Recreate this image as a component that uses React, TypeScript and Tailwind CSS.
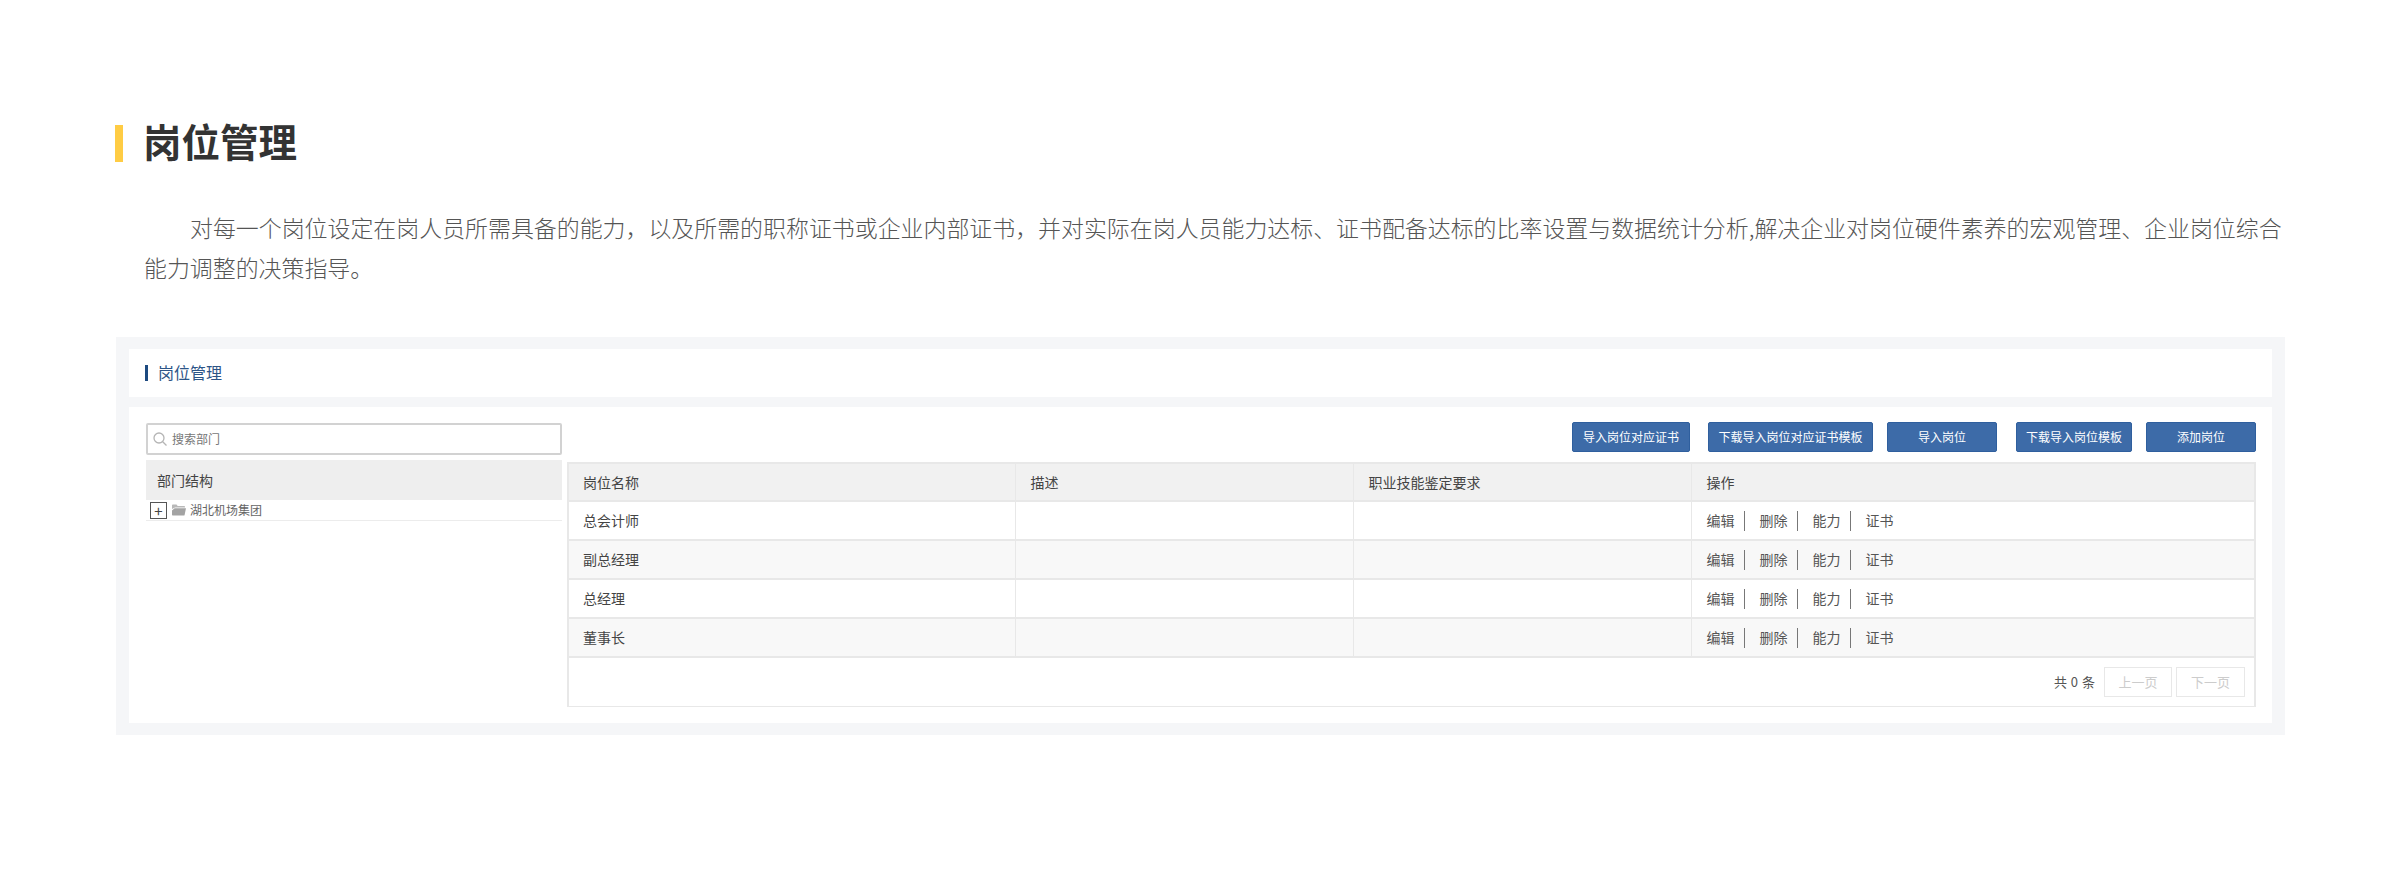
const FONT = "font-['Noto_Sans_CJK_SC','Noto_Sans',sans-serif]";

const buttons = [
  { label: "导入岗位对应证书", w: "w-[118px]", ml: "ml-0" },
  { label: "下载导入岗位对应证书模板", w: "w-[165px]", ml: "ml-[18px]" },
  { label: "导入岗位", w: "w-[110px]", ml: "ml-[14px]" },
  { label: "下载导入岗位模板", w: "w-[116px]", ml: "ml-[19px]" },
  { label: "添加岗位", w: "w-[110px]", ml: "ml-[14px]" },
];

const rows = ["总会计师", "副总经理", "总经理", "董事长"];

function Actions() {
  const items = ["编辑", "删除", "能力", "证书"];
  return (
    <div className="flex items-center text-[14px] text-[#555]">
      {items.map((t, i) => (
        <div key={t} className="flex items-center">
          <span className="w-[28px]">{t}</span>
          {i < 3 && <span className="ml-[9px] mr-[15px] h-[20px] w-px bg-[#777]" />}
        </div>
      ))}
    </div>
  );
}

function SearchIcon() {
  return (
    <svg width="16" height="16" viewBox="0 0 16 16" fill="none" stroke="#b5b5b5" strokeWidth="1.3">
      <circle cx="7" cy="7" r="5" />
      <path d="M10.7 10.7 14.5 14.5" />
    </svg>
  );
}

function FolderIcon() {
  return (
    <svg width="14" height="12" viewBox="0 0 14 12">
      <path d="M0 1.5C0 .8.5.5 1 .5h3.5l1.2 1.5H12c.6 0 1 .4 1 1v.5H3L0 5Z" fill="#b8b8b8" />
      <path d="M2.6 4.2H14L12.6 11c-.1.4-.4.6-.8.6H1c-.6 0-1-.4-1-1V6.5Z" fill="#a3a3a3" />
    </svg>
  );
}

export default function App() {
  return (
    <div className={`${FONT} h-[870px] w-[2400px] overflow-hidden bg-white pt-[125px]`}>
      <div className="flex h-[37px] items-center pl-[115px]">
        <div className="h-[37px] w-[8px] bg-[#ffcc44]" />
        <h1 className="mb-[6px] ml-[20px] text-[38.5px] font-bold leading-[37px] text-[#333]">岗位管理</h1>
      </div>

      <p className="ml-[144px] mt-[45px] w-[2150px] indent-[46px] text-[22.93px] font-light leading-[40px] text-[#555]">
        对每一个岗位设定在岗人员所需具备的能力，以及所需的职称证书或企业内部证书，并对实际在岗人员能力达标、证书配备达标的比率设置与数据统计分析,解决企业对岗位硬件素养的宏观管理、企业岗位综合能力调整的决策指导。
      </p>

      <section className="ml-[116px] mt-[50px] flex h-[398px] w-[2169px] flex-col gap-[10px] bg-[#f5f6f8] px-[13px] py-[12px]">
        <div className="flex h-[48px] items-center bg-white pl-[16px]">
          <span className="h-[16px] w-[3px] bg-[#1d4a80]" />
          <span className="mb-[2px] ml-[10px] text-[16px] text-[#2d5587]">岗位管理</span>
        </div>

        <div className="flex flex-1 gap-[5px] bg-white pl-[17px] pr-[16px] pt-[15px]">
          <aside className="w-[416px]">
            <div className="mt-[1px] flex h-[32px] items-center rounded-[2px] border-2 border-[#d2d2d2] bg-white pl-[4px]">
              <SearchIcon />
              <span className="ml-[4px] text-[12px] text-[#777]">搜索部门</span>
            </div>
            <div className="mt-[5px] flex h-[40px] items-center bg-[#eeeeee] pl-[11px] text-[14px] text-[#444]">部门结构</div>
            <div className="flex h-[21px] items-center border-b border-[#ececec] pl-[4px]">
              <span className="flex h-[17px] w-[17px] items-center justify-center border-[1.5px] border-[#555] text-[15px] leading-none text-[#444]">+</span>
              <span className="ml-[5px] flex"><FolderIcon /></span>
              <span className="ml-[4px] text-[12px] text-[#666]">湖北机场集团</span>
            </div>
          </aside>

          <div className="flex-1">
            <div className="flex h-[30px] justify-end">
              {buttons.map((b) => (
                <button
                  key={b.label}
                  className={`${b.w} ${b.ml} h-[30px] rounded-[2px] border border-[#2f5f9e] bg-[#3d6ba8] text-[12px] text-white`}
                >
                  {b.label}
                </button>
              ))}
            </div>

            <div className="mt-[10px] border-2 border-[#e8e8e8] border-b">
              <table className="w-full table-fixed border-collapse text-[14px] text-[#444]">
                <colgroup>
                  <col className="w-[446px]" />
                  <col className="w-[338px]" />
                  <col className="w-[338px]" />
                  <col />
                </colgroup>
                <thead>
                  <tr className="h-[37px] bg-[#f1f1f1] text-left">
                    <th className="border-b-2 border-[#e8e8e8] pl-[14px] font-normal">岗位名称</th>
                    <th className="border-b-2 border-l border-[#e8e8e8] pl-[15px] font-normal">描述</th>
                    <th className="border-b-2 border-l border-[#e8e8e8] pl-[15px] font-normal">职业技能鉴定要求</th>
                    <th className="border-b-2 border-l border-[#e8e8e8] pl-[15px] font-normal">操作</th>
                  </tr>
                </thead>
                <tbody>
                  {rows.map((r, i) => (
                    <tr key={r} className={`h-[39px] ${i % 2 === 1 ? "bg-[#f8f8f8]" : "bg-white"}`}>
                      <td className="border-b-2 border-[#e8e8e8] pl-[14px]">{r}</td>
                      <td className="border-b-2 border-l border-[#e8e8e8]" />
                      <td className="border-b-2 border-l border-[#e8e8e8]" />
                      <td className="border-b-2 border-l border-[#e8e8e8] pl-[15px]"><Actions /></td>
                    </tr>
                  ))}
                </tbody>
              </table>
              <div className="flex h-[48px] items-center justify-end pr-[9px] text-[13px] text-[#555]">
                <span className="[word-spacing:1px]">共 0 条</span>
                <span className="ml-[9px] flex h-[30px] w-[68px] items-center justify-center border border-[#e8e8e8] text-[#ccc]">上一页</span>
                <span className="ml-[4px] flex h-[30px] w-[69px] items-center justify-center border border-[#e8e8e8] text-[#ccc]">下一页</span>
              </div>
            </div>
          </div>
        </div>
      </section>
    </div>
  );
}
